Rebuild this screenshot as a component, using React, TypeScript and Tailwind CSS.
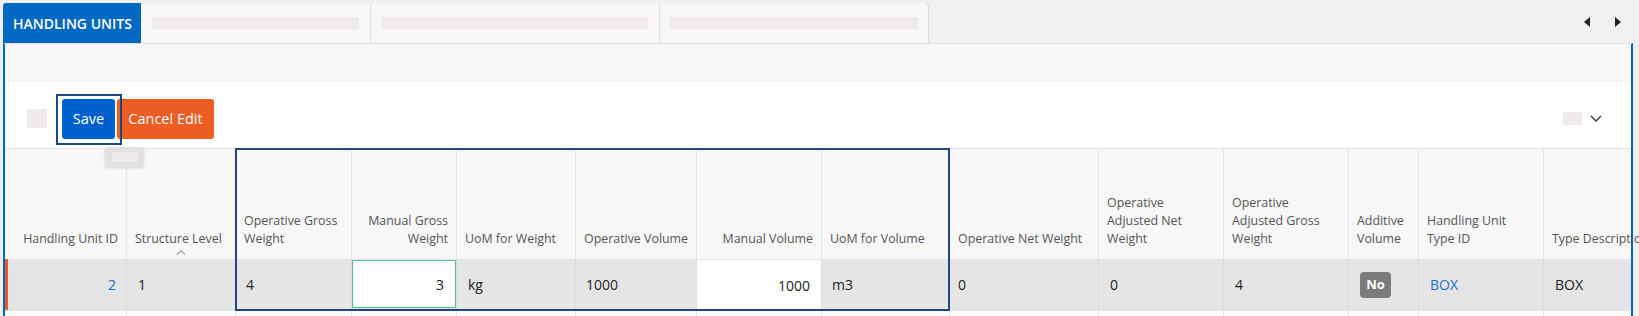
import React from 'react';

type Col = {
  w: string;
  label: string[];
  align?: 'right';
  sorted?: boolean;
};

const cols: Col[] = [
  { w: 'w-[122px]', label: ['Handling Unit ID'], align: 'right' },
  { w: 'w-[109px]', label: ['Structure Level'], sorted: true },
  { w: 'w-[116px]', label: ['Operative Gross', 'Weight'] },
  { w: 'w-[105px]', label: ['Manual Gross', 'Weight'], align: 'right' },
  { w: 'w-[119px]', label: ['UoM for Weight'] },
  { w: 'w-[121px]', label: ['Operative Volume'] },
  { w: 'w-[125px]', label: ['Manual Volume'], align: 'right' },
  { w: 'w-[128px]', label: ['UoM for Volume'] },
  { w: 'w-[149px]', label: ['Operative Net Weight'] },
  { w: 'w-[125px]', label: ['Operative', 'Adjusted Net', 'Weight'] },
  { w: 'w-[125px]', label: ['Operative', 'Adjusted Gross', 'Weight'] },
  { w: 'w-[70px]', label: ['Additive', 'Volume'] },
  { w: 'w-[125px]', label: ['Handling Unit', 'Type ID'] },
  { w: 'w-[160px]', label: ['Type Description'] },
];

function Placeholder({ className }: { className: string }) {
  return <div className={`bg-[#efe9e9] ${className}`} />;
}

export default function App() {
  return (
    <div className="w-[1639px] h-[316px] overflow-hidden bg-[#f0eff2] pt-[3px] pl-[3px] pr-[6px] font-['Open_Sans',sans-serif]">
      {/* Tab strip */}
      <div className="flex h-[40px]">
        <div className="flex w-[925px] bg-[#f7f7f7] rounded-tr-[4px] shadow-[1px_0_1px_#d6d6d6]">
          <div className="w-[138px] flex items-center pl-[10px] bg-[#0168c3] rounded-tl-[3px] text-white text-[14px] font-semibold">
            HANDLING UNITS
          </div>
          <div className="w-[230px] flex items-center px-[11px] border-r border-[#dedede]">
            <Placeholder className="h-[12px] w-full" />
          </div>
          <div className="w-[289px] flex items-center px-[11px] border-r border-[#dedede]">
            <Placeholder className="h-[12px] w-full" />
          </div>
          <div className="flex-1 flex items-center pl-[10px] pr-[10px]">
            <Placeholder className="h-[12px] w-full" />
          </div>
        </div>
        <div className="flex-1 flex items-center justify-end gap-[25px] pr-[12px] pb-[3px]">
          <svg width="6" height="10" viewBox="0 0 6 10">
            <path d="M6 0 L0 5 L6 10 Z" fill="#222" />
          </svg>
          <svg width="6" height="10" viewBox="0 0 6 10">
            <path d="M0 0 L6 5 L0 10 Z" fill="#222" />
          </svg>
        </div>
      </div>

      {/* Panel */}
      <div className="h-[273px] border-t border-t-[#e2e2e2] border-x-2 border-x-[#0067c8] bg-white">
        <div className="h-[39px] bg-[#f7f7f7]" />

        {/* Toolbar */}
        <div className="h-[66px] flex items-center pt-[6px] pl-[22px] pr-[29px] border-b border-[#e4e4e4]">
          <Placeholder className="w-[20px] h-[19px]" />
          <div className="relative ml-[15px]">
            <button className="h-[40px] w-[53px] rounded-[3px] bg-[#005fcf] text-white text-[14.5px]">
              Save
            </button>
            <div className="absolute -left-[6px] -top-[5px] -right-[7px] -bottom-[6px] border-2 border-[#1e4682] z-10" />
            <div className="absolute left-[43px] top-[48px] w-[39px] h-[20px] rounded-[3px] bg-[#e1e1e1] shadow-[0_1px_3px_rgba(0,0,0,0.15)] z-10 pl-[7px] pt-[5px]">
              <Placeholder className="w-[26px] h-[10px]" />
            </div>
          </div>
          <button className="ml-[2px] h-[40px] w-[97px] rounded-[3px] bg-[#ed5c23] text-white text-[14.5px]">
            Cancel Edit
          </button>
          <div className="flex-1" />
          <Placeholder className="w-[19px] h-[13px]" />
          <svg className="ml-[8px]" width="12" height="7" viewBox="0 0 12 7">
            <path d="M1 1 L6 6 L11 1" fill="none" stroke="#333" strokeWidth="1.3" />
          </svg>
        </div>

        {/* Grid */}
        <div className="relative">
          <div className="flex h-[110px] bg-[#f7f7f7]">
            {cols.map((c, i) => (
              <div
                key={i}
                className={`${c.w} shrink-0 relative flex flex-col justify-end pb-[11px] px-2 border-r border-[#e3e3e3] text-[12.4px] leading-[18px] text-[#555] whitespace-nowrap overflow-hidden ${
                  c.align === 'right' ? 'items-end text-right' : 'items-start'
                }`}
              >
                {c.label.map(l => (
                  <span key={l}>{l}</span>
                ))}
                {c.sorted && (
                  <svg className="absolute bottom-[4px] left-1/2 -translate-x-1/2" width="9" height="5" viewBox="0 0 9 5">
                    <path d="M0.5 4.5 L4.5 0.7 L8.5 4.5" fill="none" stroke="#666" strokeWidth="1" />
                  </svg>
                )}
              </div>
            ))}
          </div>

          {/* Data row */}
          <div className="relative flex h-[51px] bg-[#e5e5e5] text-[14px] text-[#222]">
            <div className="absolute left-0 top-0 bottom-0 w-[3px] bg-[#ec5b25]" />
            <div className="w-[122px] shrink-0 flex items-center justify-end pr-[10px] border-r border-[#dcdcdc] text-[#1a72c8]">2</div>
            <div className="w-[109px] shrink-0 flex items-center pl-[11px] border-r border-[#dcdcdc]">1</div>
            <div className="w-[116px] shrink-0 flex items-center pl-[10px] border-r border-[#dcdcdc]">4</div>
            <div className="w-[105px] shrink-0 py-[1px] pb-[2px] border-r border-[#dcdcdc]">
              <div className="h-full bg-white border border-[#4cc28c] flex items-center justify-end pr-[11px]">3</div>
            </div>
            <div className="w-[119px] shrink-0 flex items-center pl-[11px] border-r border-[#dcdcdc]">kg</div>
            <div className="w-[121px] shrink-0 flex items-center pl-[10px] border-r border-[#dcdcdc]">1000</div>
            <div className="w-[125px] shrink-0 flex items-center justify-end pr-[11px] bg-white border-r border-[#dcdcdc] mt-[1px]">1000</div>
            <div className="w-[128px] shrink-0 flex items-center pl-[10px] border-r border-[#dcdcdc]">m3</div>
            <div className="w-[149px] shrink-0 flex items-center pl-[8px] border-r border-[#dcdcdc]">0</div>
            <div className="w-[125px] shrink-0 flex items-center pl-[11px] border-r border-[#dcdcdc]">0</div>
            <div className="w-[125px] shrink-0 flex items-center pl-[11px] border-r border-[#dcdcdc]">4</div>
            <div className="w-[70px] shrink-0 flex items-center pl-[11px] border-r border-[#dcdcdc]">
              <span className="w-[31px] h-[26px] rounded-[4px] bg-[#7b7b7b] text-white font-bold text-[13px] flex items-center justify-center">No</span>
            </div>
            <div className="w-[125px] shrink-0 flex items-center pl-[11px] border-r border-[#dcdcdc] text-[#1a72c8]">BOX</div>
            <div className="w-[160px] shrink-0 flex items-center pl-[11px]">BOX</div>
          </div>

          {/* Next row */}
          <div className="flex h-[20px] bg-[#fafafa] border-t border-[#e3e3e3]">
            {cols.map((c, i) => (
              <div key={i} className={`${c.w} shrink-0 border-r border-[#e6e6e6]`} />
            ))}
          </div>

          {/* Highlight frame */}
          <div className="absolute left-[230px] -top-[1px] w-[715px] h-[163px] border-2 border-[#1e4682] pointer-events-none" />
        </div>
      </div>
    </div>
  );
}
